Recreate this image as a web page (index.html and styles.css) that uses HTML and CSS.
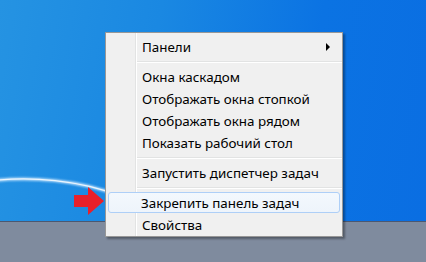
FILE: index.html
```html
<!DOCTYPE html>
<html lang="ru">
<head>
<meta charset="utf-8">
<link rel="stylesheet" href="styles.css">
</head>
<body>
<div class="screen">
  <div class="desktop">
    <svg class="swoosh" width="426" height="221" viewBox="0 0 426 221">
      <defs>
        <filter id="glow" x="-20%" y="-50%" width="140%" height="200%"><feGaussianBlur stdDeviation="1.2"/></filter>
      </defs>
      <path d="M -10 181 C 30 176, 80 180, 120 196" stroke="#cfe9ff" stroke-width="3" fill="none" filter="url(#glow)" opacity="0.9"/>
      <path d="M -10 181 C 30 176, 80 180, 120 196" stroke="#ffffff" stroke-width="1.2" fill="none" opacity="0.8"/>
    </svg>
  </div>
  <div class="taskbar"></div>

  <svg class="pointer" width="32" height="28" viewBox="0 0 32 28">
    <polygon points="1,8 15,8 15,0 31,14 15,28 15,20 1,20" fill="#e8202a"/>
  </svg>

  <div class="menu">
    <div class="item has-sub"><span>Панели</span><span class="tri"></span></div>
    <div class="sep"></div>
    <div class="item">Окна каскадом</div>
    <div class="item">Отображать окна стопкой</div>
    <div class="item">Отображать окна рядом</div>
    <div class="item">Показать рабочий стол</div>
    <div class="sep"></div>
    <div class="item">Запустить диспетчер задач</div>
    <div class="sep"></div>
    <div class="item hot">Закрепить панель задач</div>
    <div class="item">Свойства</div>
  </div>
</div>
</body>
</html>
```
FILE: styles.css
```css
html, body {
  margin: 0;
  padding: 0;
}
body {
  font-family: "Noto Sans", "Open Sans", sans-serif;
}
.screen {
  position: relative;
  width: 426px;
  height: 262px;
  overflow: hidden;
  display: flex;
  flex-direction: column;
}
.desktop {
  height: 221px;
  flex: none;
  background: linear-gradient(100deg, #2593e2 0%, #1a88e2 35%, #0b73e3 70%, #0a6ee2 100%);
  position: relative;
}
.swoosh {
  position: absolute;
  left: 0;
  top: 0;
}
.taskbar {
  flex: 1;
  background: #7f8b9e;
  border-top: 1px solid #4c5870;
}
.pointer {
  position: absolute;
  left: 73px;
  top: 187px;
}
.menu {
  position: absolute;
  left: 105px;
  top: 32px;
  width: 236px;
  padding: 3px 0 0;
  background: #f0f0f0 linear-gradient(to right, transparent 29px, #e2e3e3 29px, #e2e3e3 30px, #ffffff 30px, #ffffff 31px, transparent 31px);
  border: 1px solid #979797;
  box-shadow: 2px 2px 2px rgba(0, 0, 0, 0.35);
  font-size: 13.4px;
  color: #000;
}
.item {
  height: 22px;
  line-height: 22px;
  padding-left: 34px;
  margin: 0 2px;
  display: flex;
  justify-content: space-between;
  align-items: center;
  box-sizing: border-box;
  white-space: nowrap;
}
.item.hot {
  height: 21px;
  margin-bottom: 1px;
  padding-left: 32px;
  border: 1px solid #aecff7;
  border-radius: 3px;
  background: linear-gradient(#f3f8fd, #eef4fb);
}
.tri {
  width: 0;
  height: 0;
  border-left: 4px solid #000;
  border-top: 4px solid transparent;
  border-bottom: 4px solid transparent;
  margin-right: 10px;
}
.sep {
  height: 1px;
  margin: 3px 0 3px 31px;
  background: #e2e3e3;
  border-bottom: 1px solid #ffffff;
}
```
